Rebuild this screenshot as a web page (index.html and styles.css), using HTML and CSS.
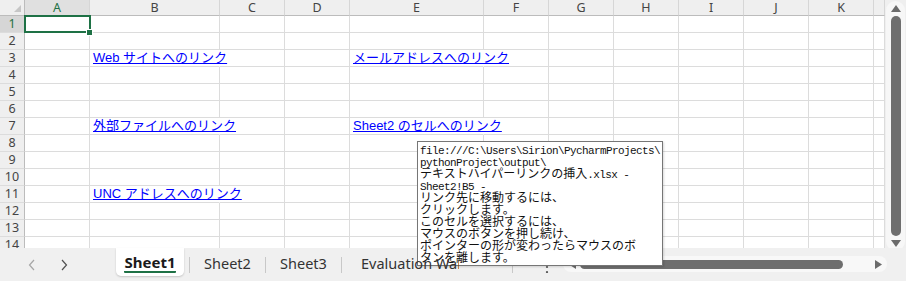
FILE: index.html
```html
<!DOCTYPE html>
<html lang="ja">
<head>
<meta charset="utf-8">
<title>Sheet1</title>
<link rel="stylesheet" href="styles.css">
</head>
<body>
<div class="app">
  <div class="top">
    <div class="sheet">
      <table class="grid">
        <colgroup>
          <col class="c-rh"><col class="c-n"><col class="c-w1"><col class="c-n"><col class="c-n"><col class="c-w2"><col class="c-n"><col class="c-n"><col class="c-n"><col class="c-n"><col class="c-n"><col class="c-n"><col class="c-last">
        </colgroup>
        <tr class="hdr">
          <th class="corner"></th><th class="sel">A</th><th>B</th><th>C</th><th>D</th><th>E</th><th>F</th><th>G</th><th>H</th><th>I</th><th>J</th><th>K</th><th></th>
        </tr>
        <tr><th class="rh rsel">1</th><td class="active"></td><td></td><td></td><td></td><td></td><td></td><td></td><td></td><td></td><td></td><td></td><td></td></tr>
        <tr><th class="rh">2</th><td></td><td></td><td></td><td></td><td></td><td></td><td></td><td></td><td></td><td></td><td></td><td></td></tr>
        <tr><th class="rh">3</th><td></td><td class="spill"><a class="lnk" href="#">Web サイトへのリンク</a></td><td></td><td></td><td class="spill"><a class="lnk" href="#">メールアドレスへのリンク</a></td><td></td><td></td><td></td><td></td><td></td><td></td><td></td></tr>
        <tr><th class="rh">4</th><td></td><td></td><td></td><td></td><td></td><td></td><td></td><td></td><td></td><td></td><td></td><td></td></tr>
        <tr><th class="rh">5</th><td></td><td></td><td></td><td></td><td></td><td></td><td></td><td></td><td></td><td></td><td></td><td></td></tr>
        <tr><th class="rh">6</th><td></td><td></td><td></td><td></td><td></td><td></td><td></td><td></td><td></td><td></td><td></td><td></td></tr>
        <tr><th class="rh">7</th><td></td><td class="spill"><a class="lnk" href="#">外部ファイルへのリンク</a></td><td></td><td></td><td class="spill"><a class="lnk" href="#">Sheet2 のセルへのリンク</a></td><td></td><td></td><td></td><td></td><td></td><td></td><td></td></tr>
        <tr><th class="rh">8</th><td></td><td></td><td></td><td></td><td></td><td></td><td></td><td></td><td></td><td></td><td></td><td></td></tr>
        <tr><th class="rh">9</th><td></td><td></td><td></td><td></td><td></td><td></td><td></td><td></td><td></td><td></td><td></td><td></td></tr>
        <tr><th class="rh">10</th><td></td><td></td><td></td><td></td><td></td><td></td><td></td><td></td><td></td><td></td><td></td><td></td></tr>
        <tr><th class="rh">11</th><td></td><td class="spill"><a class="lnk" href="#">UNC アドレスへのリンク</a></td><td></td><td></td><td></td><td></td><td></td><td></td><td></td><td></td><td></td><td></td></tr>
        <tr><th class="rh">12</th><td></td><td></td><td></td><td></td><td></td><td></td><td></td><td></td><td></td><td></td><td></td><td></td></tr>
        <tr><th class="rh">13</th><td></td><td></td><td></td><td></td><td></td><td></td><td></td><td></td><td></td><td></td><td></td><td></td></tr>
        <tr><th class="rh">14</th><td></td><td></td><td></td><td></td><td></td><td></td><td></td><td></td><td></td><td></td><td></td><td></td></tr>
      </table>
    </div>
    <div class="vscroll">
      <div class="vtrack">
        <svg class="arr-up" width="10" height="7" viewBox="0 0 10 7"><polygon points="5,0 10,7 0,7" fill="#6b6b6b"/></svg>
        <div class="vthumb"></div>
        <svg class="arr-down" width="10" height="7" viewBox="0 0 10 7"><polygon points="0,0 10,0 5,7" fill="#6b6b6b"/></svg>
      </div>
    </div>
  </div>

  <div class="bar">
    <div class="nav">
      <svg width="8" height="12" viewBox="0 0 8 12"><polyline points="6,1 1.5,6 6,11" fill="none" stroke="#a6a6a6" stroke-width="1.2"/></svg>
      <svg width="8" height="12" viewBox="0 0 8 12"><polyline points="2,1 6.5,6 2,11" fill="none" stroke="#505050" stroke-width="1.2"/></svg>
    </div>
    <div class="tab active-tab"><span class="tab-label">Sheet1</span></div>
    <div class="sep first-sep"></div>
    <div class="tab">Sheet2</div>
    <div class="sep"></div>
    <div class="tab">Sheet3</div>
    <div class="sep"></div>
    <div class="tab tab-eval"><span class="eval-label">Evaluation Warning</span></div>
    <div class="sep"></div>
    <div class="more">
      <svg width="4" height="16" viewBox="0 0 4 16"><circle cx="2" cy="5" r="1.1" fill="#555"/><circle cx="2" cy="10" r="1.1" fill="#555"/><circle cx="2" cy="15" r="1.1" fill="#555"/></svg>
    </div>
    <div class="hscroll">
      <svg class="arr-left" width="7" height="9" viewBox="0 0 7 9"><polygon points="0,4.5 7,0 7,9" fill="#6b6b6b"/></svg>
      <div class="hthumb"></div>
      <svg class="arr-right" width="7" height="9" viewBox="0 0 7 9"><polygon points="7,4.5 0,0 0,9" fill="#6b6b6b"/></svg>
    </div>
  </div>

  <div class="tip">
    <div class="ln"><span class="a">file:///C:\Users\Sirion\PycharmProjects\</span></div>
    <div class="ln"><span class="a">pythonProject\output\</span></div>
    <div class="ln">テキストハイパーリンクの挿入<span class="a">.xlsx -</span></div>
    <div class="ln"><span class="a">Sheet2!B5 -</span></div>
    <div class="ln">リンク先に移動するには、</div>
    <div class="ln">クリックします。</div>
    <div class="ln">このセルを選択するには、</div>
    <div class="ln">マウスのボタンを押し続け、</div>
    <div class="ln">ポインターの形が変わったらマウスのボ</div>
    <div class="ln">タンを離します。</div>
  </div>
</div>
</body>
</html>
```

FILE: styles.css
```css
html, body {
  margin: 0;
  padding: 0;
}

body {
  width: 906px;
  height: 281px;
  overflow: hidden;
  background: #f0f0f0;
  font-family: "Liberation Sans", "Noto Sans CJK JP", sans-serif;
}

.app {
  position: relative;
  width: 906px;
  height: 281px;
  display: flex;
  flex-direction: column;
}

.top {
  display: flex;
  height: 248px;
}

.sheet {
  width: 885px;
  height: 248px;
  overflow: hidden;
  background: #fff;
}

.grid {
  border-collapse: separate;
  border-spacing: 0;
  table-layout: fixed;
  width: 885px;
}

.c-rh { width: 25px; }
.c-n { width: 65px; }
.c-w1 { width: 130px; }
.c-w2 { width: 134px; }
.c-last { width: 11px; }

.grid tr { height: 17px; }
.grid tr.hdr { height: 16px; }

.grid td {
  box-sizing: border-box;
  border-right: 1px solid #dcdcdc;
  border-bottom: 1px solid #dcdcdc;
  padding: 0 0 0 3px;
  white-space: nowrap;
  overflow: visible;
  vertical-align: bottom;
  font-size: 13px;
  line-height: 16px;
}

.grid td.spill {
  border-right-color: transparent;
}

.hdr th {
  box-sizing: border-box;
  background: #efefef;
  border-right: 1px solid #d6d6d6;
  border-bottom: 1px solid #bcbcbc;
  padding: 1px 0 0 0;
  font-family: "Noto Sans", sans-serif;
  font-size: 12.5px;
  font-weight: normal;
  line-height: 14px;
  color: #444;
  text-align: center;
}

.hdr th.sel {
  background: #e0e0e0;
  color: #1e7145;
}

.hdr th.corner {
  position: relative;
  border-right: 1px solid #bcbcbc;
}

.hdr th.corner::after {
  content: "";
  position: absolute;
  right: 3px;
  bottom: 3px;
  width: 0;
  height: 0;
  border-left: 7px solid transparent;
  border-bottom: 7px solid #c6c6c6;
}

.grid th.rh {
  box-sizing: border-box;
  background: #efefef;
  border-right: 1px solid #bcbcbc;
  border-bottom: 1px solid #dcdcdc;
  padding: 0;
  font-family: "Noto Sans", sans-serif;
  font-size: 12.5px;
  font-weight: normal;
  line-height: 16px;
  color: #444;
  text-align: center;
}

.grid th.rsel {
  background: #d6d6d6;
  color: #1e7145;
}

.grid td.active {
  position: relative;
}

.grid td.active::after {
  content: "";
  position: absolute;
  left: -1px;
  top: -1px;
  right: -2px;
  bottom: -1px;
  border: 2px solid #1e7145;
}

.grid td.active::before {
  content: "";
  position: absolute;
  right: -4px;
  bottom: -4px;
  width: 5px;
  height: 5px;
  background: #1e7145;
  border: 1px solid #fff;
  z-index: 1;
}

.lnk {
  color: #0000ff;
  text-decoration: underline;
}

/* vertical scrollbar */
.vscroll {
  width: 21px;
  height: 248px;
  background: #efefef;
  box-sizing: border-box;
  padding: 1px 1px 0 1px;
}

.vtrack {
  height: 250px;
  border-radius: 10px;
  background: #f7f7f7;
  display: flex;
  flex-direction: column;
  align-items: center;
}

.arr-up {
  margin-top: 4px;
  flex: none;
}

.vthumb {
  margin-top: 4px;
  width: 10px;
  height: 220px;
  border-radius: 5px;
  background: #6e6e6e;
  flex: none;
}

.arr-down {
  margin-top: 4px;
  flex: none;
}

/* bottom bar */
.bar {
  display: flex;
  height: 33px;
  background: #f0f0f0;
  font-family: "Noto Sans", sans-serif;
  font-size: 14.5px;
  color: #333;
}

.nav {
  width: 116px;
  box-sizing: border-box;
  padding-left: 28px;
  display: flex;
  align-items: center;
  gap: 24px;
}

.tab {
  width: 75px;
  flex: none;
  text-align: center;
  line-height: 17px;
  padding-top: 7px;
  box-sizing: border-box;
  white-space: nowrap;
}

.active-tab {
  width: 68px;
  height: 28px;
  background: #fff;
  border-radius: 0 0 5px 5px;
  box-shadow: 0 1px 2px rgba(0, 0, 0, 0.18);
  font-weight: bold;
  font-size: 15px;
  color: #1a1a1a;
  padding-top: 6px;
}

.tab-label {
  display: inline-block;
  line-height: 17px;
  border-bottom: 2px solid #1e7145;
  border-radius: 1px;
}

.sep {
  width: 1px;
  height: 16px;
  align-self: center;
  background: #c8c8c8;
  flex: none;
}

.first-sep {
  margin-left: 5px;
}

.tab-eval {
  width: 170px;
  text-align: left;
  padding-left: 19px;
}

.eval-label {
  position: relative;
  z-index: 3;
  display: inline-block;
  width: 98px;
  overflow: hidden;
  vertical-align: top;
}

.more {
  width: 50px;
  flex: none;
  box-sizing: border-box;
  padding-left: 32px;
  display: flex;
  align-items: center;
}

.hscroll {
  width: 324px;
  height: 16px;
  margin-top: 8px;
  border-radius: 8px;
  background: #f8f8f8;
  display: flex;
  align-items: center;
  flex: none;
  box-sizing: border-box;
  padding-left: 6px;
}

.hthumb {
  margin-left: 4px;
  width: 263px;
  height: 9px;
  border-radius: 5px;
  background: #6e6e6e;
  flex: none;
}

.arr-right {
  margin-left: 32px;
  flex: none;
}

.arr-left {
  flex: none;
}

/* hyperlink tooltip */
.tip {
  position: absolute;
  left: 417px;
  top: 141px;
  width: 246px;
  height: 125px;
  box-sizing: border-box;
  border: 1px solid #767676;
  background: #fff;
  padding: 1px 0 0 2px;
  font-family: "Noto Sans CJK JP", sans-serif;
  font-size: 12px;
  line-height: 12px;
  color: #111;
  white-space: nowrap;
  z-index: 2;
  box-shadow: 1px 1px 2px rgba(0, 0, 0, 0.15);
}

.tip .ln {
  height: 12px;
}

.tip .a {
  font-family: "Liberation Mono", monospace;
  font-size: 11px;
  letter-spacing: -0.6px;
}
```
